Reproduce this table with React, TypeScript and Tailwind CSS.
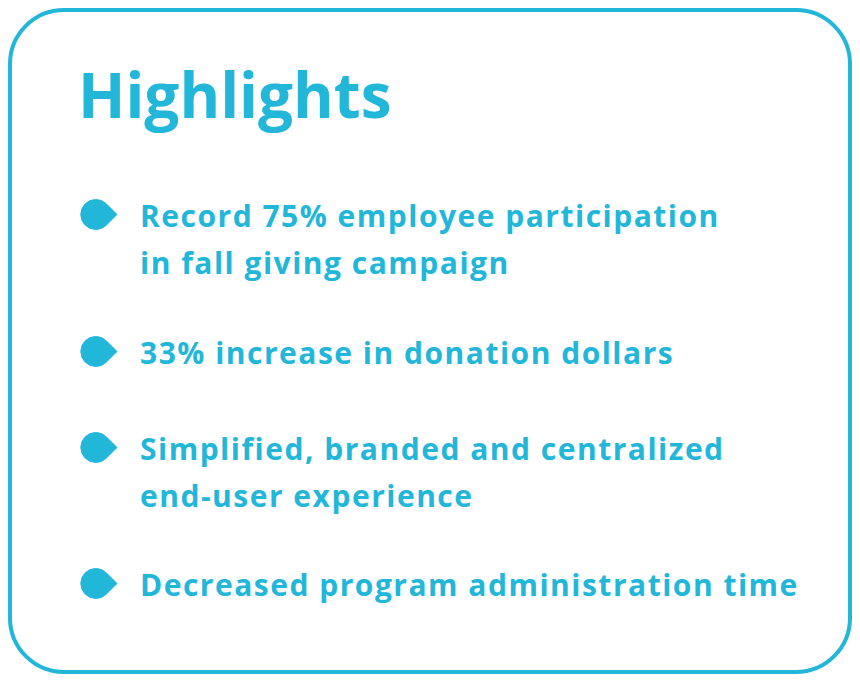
const items = [
  { lines: ["Record 75% employee participation", "in fall giving campaign"], mt: "mt-0" },
  { lines: ["33% increase in donation dollars"], mt: "mt-[43px]" },
  { lines: ["Simplified, branded and centralized", "end-user experience"], mt: "mt-[49px]" },
  { lines: ["Decreased program administration time"], mt: "mt-[42px]" },
];

function Drop() {
  return (
    <svg width="38" height="31" viewBox="0 0 38 31" className="shrink-0">
      <path
        d="M37 15.5 L26.4 4.9 A15 15 0 1 0 26.4 26.1 Z"
        fill="#22b6d9"
        strokeLinejoin="round"
        stroke="#22b6d9"
        strokeWidth="1"
      />
    </svg>
  );
}

export default function App() {
  return (
    <div className="w-[860px] h-[682px] bg-white p-2 font-['Open_Sans',sans-serif]">
      <div className="h-full rounded-[56px] border-4 border-[#22b6d9] pl-[68px] pt-[42px]">
        <h1 className="-ml-[2px] text-[62px] font-bold leading-[80px] text-[#22b6d9]">
          Highlights
        </h1>
        <ul className="mt-[58px] flex flex-col">
          {items.map((item, i) => (
            <li key={i} className={`flex items-start gap-[22px] ${item.mt}`}>
              <div className="pt-[7px]">
                <Drop />
              </div>
              <p className="text-[30px] font-bold tracking-[0.05em] leading-[47px] text-[#22b6d9]">
                {item.lines.map((l, j) => (
                  <span key={j} className="block">
                    {l}
                  </span>
                ))}
              </p>
            </li>
          ))}
        </ul>
      </div>
    </div>
  );
}
